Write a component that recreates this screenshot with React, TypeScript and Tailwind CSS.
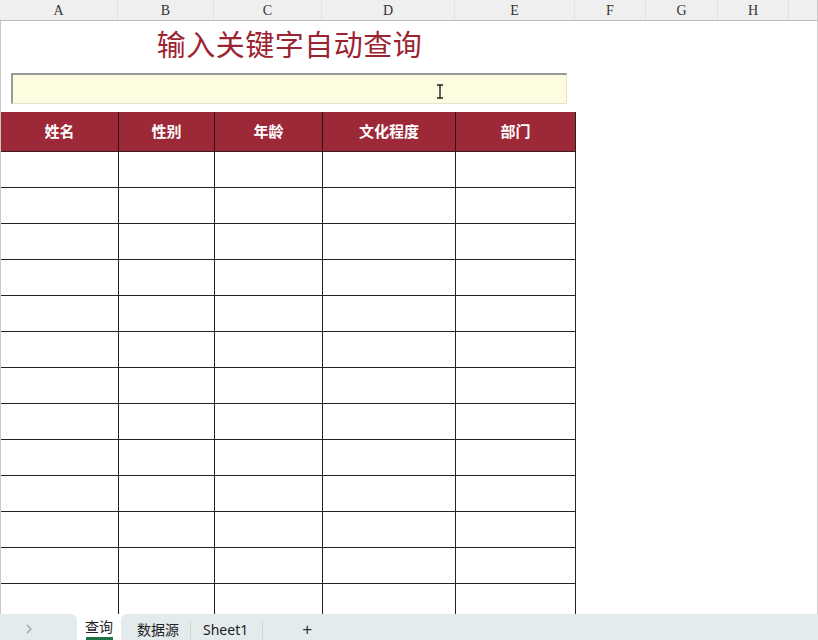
import React from 'react'

const COLS = [
  { key: 'A', w: 'w-[118px]' },
  { key: 'B', w: 'w-[96px]' },
  { key: 'C', w: 'w-[108px]' },
  { key: 'D', w: 'w-[133px]' },
  { key: 'E', w: 'w-[120px]' },
  { key: 'F', w: 'w-[71px]' },
  { key: 'G', w: 'w-[72px]' },
  { key: 'H', w: 'w-[71px]' },
]

const FIELDS = [
  { label: '姓名', w: 'w-[118px]' },
  { label: '性别', w: 'w-[96px]' },
  { label: '年龄', w: 'w-[108px]' },
  { label: '文化程度', w: 'w-[133px]' },
  { label: '部门', w: 'w-[119px]' },
]

const ROWS = 13

export default function App() {
  return (
    <div className="w-[818px] h-[640px] flex flex-col bg-white overflow-hidden font-['Noto_Sans_CJK_SC',sans-serif]">
      {/* column letters */}
      <div className="h-[21px] flex shrink-0 bg-[#efefef] border-b border-[#bdbdbd] text-[14px] text-[#333] font-['Liberation_Serif',serif]">
        {COLS.map(c => (
          <div key={c.key} className={`${c.w} shrink-0 flex items-center justify-center border-r border-[#e2e2e2]`}>
            {c.key}
          </div>
        ))}
        <div className="flex-1 border-r border-[#c8c8c8]" />
      </div>

      {/* sheet */}
      <div className="flex-1 min-h-0 overflow-hidden border-l border-[#c8c8c8] border-r border-r-[#d0d0d0]">
        <div className="w-[575px] h-[44px] flex items-center justify-center">
          <h1 className="text-[29px] leading-none text-[#9b2332] font-normal tracking-[0.5px] pl-[2px]">
            输入关键字自动查询
          </h1>
        </div>

        <div className="h-[47px] pl-[10px] pt-[8px]">
          <div className="relative w-[556px] h-[31px] bg-[#fdfbe0] border-t-2 border-l-2 border-[#9a9a9a] border-r border-b border-r-[#e6e4cf] border-b-[#e6e4cf]">
            <svg className="absolute left-[423px] top-[9px]" width="8" height="15" viewBox="0 0 8 15">
              <path d="M1 1h6M1 14h6M4 1v13" stroke="#222" strokeWidth="1.4" fill="none" />
            </svg>
          </div>
        </div>

        <div className="w-[575px] border-r border-[#222]">
          <div className="h-[40px] flex bg-[#9d2837] border-b border-[#3a1a1e]">
            {FIELDS.map((f, i) => (
              <div
                key={f.label}
                className={`${f.w} shrink-0 flex items-center justify-center text-white text-[15px] font-bold ${i < FIELDS.length - 1 ? 'border-r border-[#2a1518]' : ''}`}
              >
                {f.label}
              </div>
            ))}
          </div>
          {Array.from({ length: ROWS }).map((_, r) => (
            <div key={r} className="h-[36px] flex border-b border-[#222]">
              {FIELDS.map((f, i) => (
                <div
                  key={f.label}
                  className={`${f.w} shrink-0 ${i < FIELDS.length - 1 ? 'border-r border-[#222]' : ''}`}
                />
              ))}
            </div>
          ))}
        </div>
      </div>

      {/* sheet tabs */}
      <div className="h-[26px] shrink-0 flex bg-white text-[14px] text-[#222]">
        <div className="w-[77px] bg-[#e4ebec] rounded-tr-[6px] flex items-center pl-[25px] pt-[3px]">
          <svg width="8" height="12" viewBox="0 0 8 12">
            <path d="M2 2l4 4-4 4" stroke="#9a9a9a" strokeWidth="1.1" fill="none" />
          </svg>
        </div>
        <div className="w-[44px] relative flex items-center justify-center">
          <span className="leading-none pb-[3px]">查询</span>
          <div className="absolute left-[9px] bottom-0 w-[27px] h-[3px] bg-[#217346]" />
        </div>
        <div className="flex-1 bg-[#e4ebec] rounded-tl-[6px] flex items-center pt-[5px]">
          <div className="h-[18px] flex items-center pl-[16px] pr-[11px] border-r border-[#cfd6d8]">
            数据源
          </div>
          <div className="h-[18px] flex items-center pl-[12px] pr-[14px] border-r border-[#cfd6d8] font-['Noto_Sans',sans-serif] text-[14px]">
            Sheet1
          </div>
          <span className="ml-[39px] text-[17px] leading-[18px] text-[#333] font-['Liberation_Sans',sans-serif]">
            +
          </span>
        </div>
      </div>
    </div>
  )
}
